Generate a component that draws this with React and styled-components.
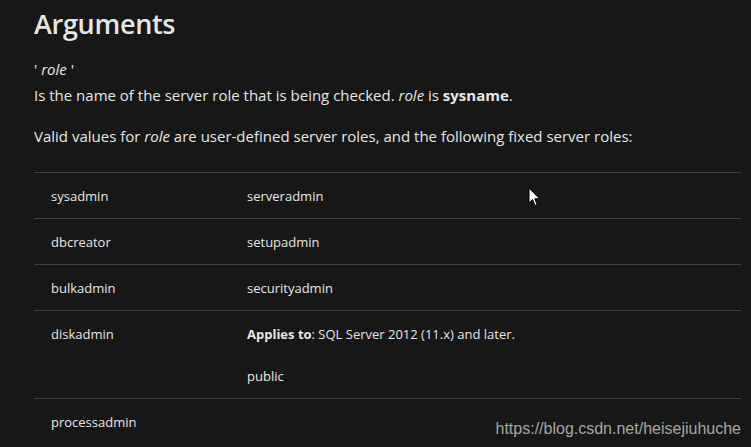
import React from "react";
import styled, { createGlobalStyle } from "styled-components";

const GlobalStyle = createGlobalStyle`
  html, body {
    margin: 0;
    padding: 0;
    background: #171717;
  }
  body {
    font-family: "Open Sans", "Noto Sans", sans-serif;
    color: #e6e6e6;
  }
`;

const rows = [
  { left: "sysadmin", right: ["serveradmin"] },
  { left: "dbcreator", right: ["setupadmin"] },
  { left: "bulkadmin", right: ["securityadmin"] },
  { left: "diskadmin", right: ["applies", "public"] },
  { left: "processadmin", right: [] },
];

const App = () => {
  return (
    <>
      <GlobalStyle />
      <Page>
        <Heading>Arguments</Heading>
        <ArgName>
          ' <em>role</em> '
        </ArgName>
        <Para>
          Is the name of the server role that is being checked. <em>role</em> is{" "}
          <strong>sysname</strong>.
        </Para>
        <Para $gap>
          Valid values for <em>role</em> are user-defined server roles, and the
          following fixed server roles:
        </Para>
        <Table>
          {rows.map((row) => (
            <Row key={row.left}>
              <Cell>{row.left}</Cell>
              <Cell>
                {row.right.map((item) =>
                  item === "applies" ? (
                    <CellLine key={item}>
                      <strong>Applies to</strong>: SQL Server 2012 (11.x) and later.
                    </CellLine>
                  ) : (
                    <CellLine key={item}>{item}</CellLine>
                  )
                )}
              </Cell>
            </Row>
          ))}
        </Table>
      </Page>
      <Watermark>https://blog.csdn.net/heisejiuhuche</Watermark>
      <Cursor width="13" height="20" viewBox="0 0 13 20">
        <path
          d="M1 1 L1 16 L4.5 12.5 L7 18.5 L9.2 17.6 L6.8 11.8 L11.5 11.8 Z"
          fill="#fff"
          stroke="#000"
          strokeWidth="1"
          strokeLinejoin="miter"
        />
      </Cursor>
    </>
  );
};

export default App;

const Page = styled.div`
  padding: 4px 10px 0 34px;
  height: 447px;
  box-sizing: border-box;
  overflow: hidden;
`;

const Heading = styled.h2`
  margin: 0 0 15px;
  font-size: 27px;
  font-weight: 600;
  line-height: 40px;
  letter-spacing: -0.3px;
`;

const ArgName = styled.div`
  font-size: 15px;
  line-height: 20px;
  em {
    font-style: italic;
  }
`;

const Para = styled.p`
  margin: ${(props) => (props.$gap ? "21px" : "6px")} 0 0;
  font-size: 15px;
  line-height: 20px;
  strong {
    font-weight: 700;
  }
`;

const Table = styled.div`
  margin-top: 26px;
  border-top: 1px solid #404040;
`;

const Row = styled.div`
  display: grid;
  grid-template-columns: 196px 1fr;
  border-bottom: 1px solid #404040;
  font-size: 13px;
  line-height: 18px;
  &:last-child {
    border-bottom: none;
  }
`;

const Cell = styled.div`
  padding: 14px 17px 13px;
  display: flex;
  flex-direction: column;
  gap: 24px;
  min-height: 18px;
  strong {
    font-weight: 700;
  }
`;

const CellLine = styled.div``;

const Watermark = styled.div`
  position: absolute;
  right: 10px;
  bottom: 9px;
  font-family: "Liberation Sans", Arial, sans-serif;
  font-size: 16px;
  color: #a6a6a6;
`;

const Cursor = styled.svg`
  position: absolute;
  left: 528px;
  top: 187px;
`;
